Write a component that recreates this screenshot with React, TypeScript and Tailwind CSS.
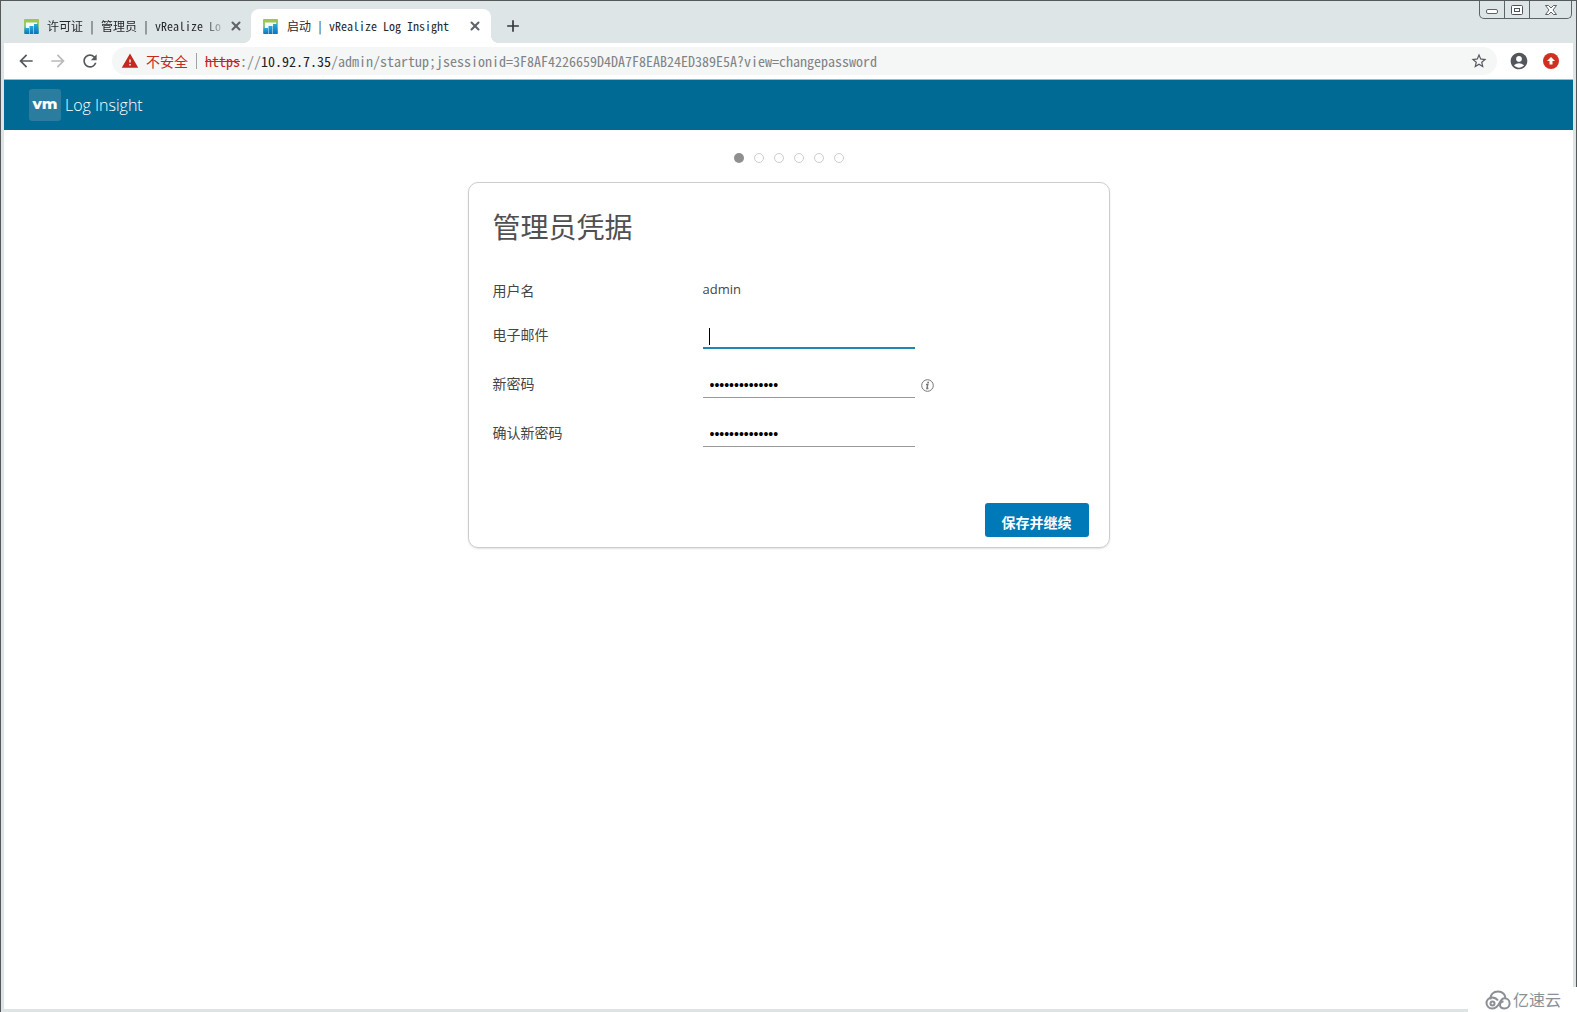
import React from 'react';
import { MdArrowBack, MdArrowForward, MdRefresh, MdStarBorder, MdAccountCircle, MdAdd, MdWarning } from 'react-icons/md';
import { X } from 'lucide-react';

const MONO = "font-['Noto_Sans_Mono_CJK_SC','Noto_Sans_CJK_SC','Liberation_Mono',monospace]";

function Favicon() {
  return (
    <svg viewBox="0 0 15 15" className="size-[15px] shrink-0" aria-hidden="true">
      <defs>
        <linearGradient id="fav-frame" x1="0" y1="0" x2="0" y2="1">
          <stop offset="0" stopColor="#a5c63b" />
          <stop offset="0.45" stopColor="#8fc98a" />
          <stop offset="1" stopColor="#1a8ecb" />
        </linearGradient>
        <linearGradient id="fav-bar" x1="0" y1="0" x2="0" y2="1">
          <stop offset="0" stopColor="#2aa9dc" />
          <stop offset="1" stopColor="#0a73bd" />
        </linearGradient>
      </defs>
      <rect width="15" height="15" rx="1" fill="url(#fav-frame)" />
      <path d="M2 3.500h11v11.500h-11z" fill="#f4faf6" />
      <rect x="1" y="9" width="4" height="6" fill="url(#fav-bar)" />
      <rect x="5.500" y="7" width="4" height="8" fill="url(#fav-bar)" />
      <rect x="10" y="5" width="4" height="10" fill="url(#fav-bar)" />
    </svg>
  );
}

function WindowButtons() {
  const base = 'flex h-[17px] items-center justify-center border-r border-[#5d6366]';
  return (
    <div className="ml-auto mr-px flex h-[18px] overflow-hidden rounded-b-[5px] border border-t-0 border-[#5d6366]">
      <button type="button" aria-label="最小化" className={`${base} w-[25px]`}>
        <svg viewBox="0 0 13 6" className="mt-1 h-[6px] w-[13px]">
          <rect x="0.5" y="0.5" width="11" height="4" rx="1.5" fill="#fff" stroke="#5d6366" />
        </svg>
      </button>
      <button type="button" aria-label="还原" className={`${base} w-[25px]`}>
        <svg viewBox="0 0 12 10" className="h-[10px] w-[12px]">
          <rect x="0.5" y="0.5" width="11" height="9" rx="1" fill="#fff" stroke="#4d5356" />
          <rect x="3.5" y="3.5" width="5" height="3" fill="#fff" stroke="#4d5356" />
        </svg>
      </button>
      <button type="button" aria-label="关闭窗口" className="flex h-[17px] w-[41px] items-center justify-center">
        <svg viewBox="0 0 12 10" className="h-[10px] w-[12px]">
          <path
            d="M.5 .5h3L6 3 8.500 .5h3L8 5l3.500 4.500h-3L6 7 3.500 9.500h-3L4 5z"
            fill="#fff"
            stroke="#4d5356"
            strokeWidth="0.9"
          />
        </svg>
      </button>
    </div>
  );
}

function CredentialField({
  id,
  label,
  type,
  value,
  active,
  info,
}: {
  id: string;
  label: string;
  type: string;
  value: string;
  active?: boolean;
  info?: boolean;
}) {
  return (
    <div className="flex items-center">
      <label htmlFor={id} className="w-[210px] pb-1">
        {label}
      </label>
      <div className="relative">
        <input
          id={id}
          type={type}
          defaultValue={value}
          className={`block h-6 w-[212px] bg-transparent px-[7px] pb-px font-['Liberation_Sans',sans-serif] text-[14px] text-black outline-none ${
            active ? 'border-b-2 border-[#1f87b3]' : 'border-b border-[#9a9a9a]'
          }`}
        />
        {active && <span className="absolute left-[6px] top-[3px] h-[17px] w-px bg-black" />}
      </div>
      {info && (
        <button type="button" aria-label="密码要求" className="ml-[6px] pb-[2px]">
          <svg viewBox="0 0 13 13" className="size-[13px]" fill="none" stroke="#757575">
            <circle cx="6.500" cy="6.500" r="5.800" strokeWidth="1" />
            <path d="M5 5.500h1.800L5.900 9.500h1.500" strokeWidth="1.400" />
            <circle cx="7.100" cy="3.500" r="0.900" fill="#757575" stroke="none" />
          </svg>
        </button>
      )}
    </div>
  );
}

export default function App() {
  return (
    <div className="relative flex min-h-screen flex-col border-x border-t border-[#55595c] bg-white font-['Open_Sans','Noto_Sans_CJK_SC',sans-serif]">
      <div className="flex grow flex-col border-b-[3px] border-l-[3px] border-r-[3px] border-[#dde5e4]">
        <div className={`flex h-[42px] bg-[#dde5e6] text-[12px] text-[#26292c] ${MONO}`}>
          <div className="mt-2 flex w-[247px] items-center pl-5 pr-2">
            <Favicon />
            <div className="ml-2 whitespace-pre [mask-image:linear-gradient(to_right,black_155px,transparent_180px)]">
              许可证 | 管理员 | vRealize Lo
            </div>
            <button type="button" aria-label="关闭标签页" className="ml-auto text-[#5f6368]">
              <X size={14} strokeWidth={3.5} />
            </button>
          </div>
          <div className="relative mt-2 flex w-[240px] items-center rounded-t-lg bg-white pl-3 pr-[9px]">
            <span className="absolute -left-2 bottom-0 size-2 bg-[radial-gradient(circle_at_0_0,transparent_8px,white_8px)]" />
            <span className="absolute -right-2 bottom-0 size-2 bg-[radial-gradient(circle_at_100%_0,transparent_8px,white_8px)]" />
            <Favicon />
            <div className="ml-[9px] whitespace-pre">启动 | vRealize Log Insight</div>
            <button type="button" aria-label="关闭标签页" className="ml-auto text-[#5f6368]">
              <X size={14} strokeWidth={3.5} />
            </button>
          </div>
          <button type="button" aria-label="新标签页" className="ml-3 mt-2 self-stretch text-[20px] text-[#33373b]">
            <MdAdd />
          </button>
          <WindowButtons />
        </div>

        <div className="flex h-[37px] items-center border-b border-[#a9b6ba] bg-white pl-3 pr-[14px] text-[20px] text-[#55595d]">
          <button type="button" aria-label="后退">
            <MdArrowBack />
          </button>
          <button type="button" aria-label="前进" className="ml-3 text-[#b9bbbd]">
            <MdArrowForward />
          </button>
          <button type="button" aria-label="重新加载" className="ml-3">
            <MdRefresh />
          </button>
          <div className={`ml-3 flex h-7 grow items-center rounded-full bg-[#f5f6f6] pl-[9px] pr-[9px] text-[14px] ${MONO}`}>
            <MdWarning className="text-[18px] text-[#c5281f]" />
            <span className="ml-[7px] text-[#c5281f]">不安全</span>
            <span className="ml-2 h-4 w-px bg-[#a0a3a6]" />
            <div className="ml-2 whitespace-nowrap text-[#808386]">
              <span className="text-[#c5281f] line-through">https</span>://
              <span className="text-[#202124]">10.92.7.35</span>
              /admin/startup;jsessionid=3F8AF4226659D4DA7F8EAB24ED389E5A?view=changepassword
            </div>
            <button type="button" aria-label="为此网页添加书签" className="ml-auto text-[18px] text-[#55595d]">
              <MdStarBorder />
            </button>
          </div>
          <button type="button" aria-label="用户" className="ml-3 text-[20px] text-[#53575c]">
            <MdAccountCircle />
          </button>
          <button
            type="button"
            aria-label="更新"
            className="ml-[14px] flex size-4 items-center justify-center rounded-full bg-[#d22f23]"
          >
            <svg viewBox="0 0 8 8" className="size-2">
              <path d="M4 0l4 4H5.500v3.500h-3V4H0z" fill="#fff" />
            </svg>
          </button>
        </div>

        <header className="flex h-[50px] shrink-0 items-center bg-[#006a94] pl-[25px] text-white">
          <div className="flex size-8 items-center justify-center rounded-[3px] bg-[#2a7d9f] pb-1 font-['Montserrat','Lato',sans-serif] text-[15px] font-extrabold leading-none">
            vm
          </div>
          <span className="ml-1 pb-px text-[16px] font-light">Log Insight</span>
        </header>

        <main className="flex flex-col items-center">
          <div className="flex gap-[10px] pt-[23px]">
            <span className="size-[10px] rounded-full bg-[#8f8f8f]" />
            {[2, 3, 4, 5, 6].map((step) => (
              <span key={step} className="size-[10px] rounded-full border border-[#cdcdcd]" />
            ))}
          </div>

          <form
            className="mt-[19px] w-full max-w-[642px] rounded-[10px] border border-[#cccccc] pb-[10px] pl-6 pr-5 pt-[26px] text-[14px] leading-5 text-[#454545] shadow-[0_1px_2px_#0000001f]"
            onSubmit={(e) => e.preventDefault()}
          >
            <h1 className="text-[28px] font-normal leading-9 text-[#505050]">管理员凭据</h1>
            <div className="mt-8 flex h-6 items-center">
              <span className="w-[210px] pt-1">用户名</span>
              <span className="text-[13px]">admin</span>
            </div>
            <div className="mt-6 flex flex-col gap-[25px]">
              <CredentialField id="email" label="电子邮件" type="email" value="" active />
              <CredentialField id="password" label="新密码" type="password" value="vmware-insight" info />
              <CredentialField id="confirm" label="确认新密码" type="password" value="vmware-insight" />
            </div>
            <div className="mt-14 flex justify-end">
              <button type="submit" className="h-[34px] rounded-[3px] bg-[#0079b8] px-[17px] pt-[6px] font-bold text-white">
                保存并继续
              </button>
            </div>
          </form>
        </main>
      </div>

      <div className="absolute -right-px bottom-0 flex h-[25px] w-[109px] items-center justify-end gap-[2px] bg-white pr-4 text-[16px] leading-none text-[#8b9096]">
        <svg viewBox="0 0 26 20" className="h-5 w-[26px]" fill="none" stroke="#8b9096" strokeWidth="2">
          <path d="M5.500 9.500C5 4.500 8.500 1.500 13 1.500s7.500 3 7.500 7" />
          <path d="M13 10.500c-1.500-2-3.500-3-6-3A5.500 5.500 0 0 0 7 18.500c4 0 6-2.500 7.500-5.500S17 8.300 19.500 8.300a5.100 5.100 0 0 1 0 10.200c-2.800 0-4.500-1.700-4.500-3.700s1.500-3.300 3.500-3.300" />
          <circle cx="7.500" cy="13.500" r="2" />
        </svg>
        亿速云
      </div>
    </div>
  );
}
